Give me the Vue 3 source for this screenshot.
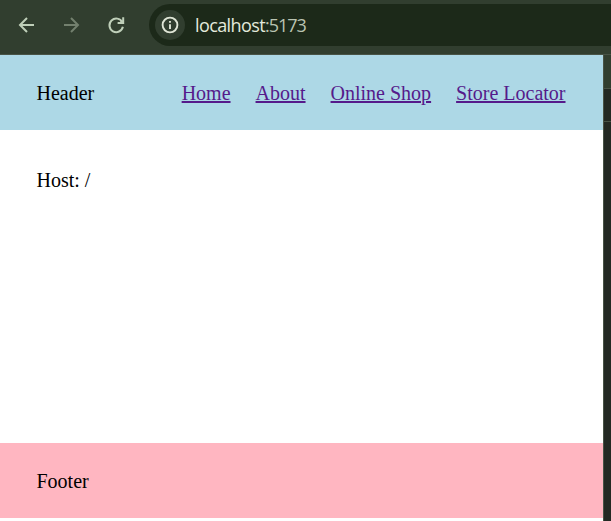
<script setup>
const links = ['Home', 'About', 'Online Shop', 'Store Locator']
</script>

<template>
  <div class="browser">
    <div class="toolbar">
      <svg class="icon back" viewBox="0 0 24 24" width="24" height="24">
        <path d="M19 12H5.5M12 5L5 12L12 19" />
      </svg>
      <svg class="icon forward" viewBox="0 0 24 24" width="24" height="24">
        <path d="M5 12H18.5M12 5L19 12L12 19" />
      </svg>
      <svg class="icon reload" viewBox="0 0 24 24" width="24" height="24">
        <path d="M18.3 9.2A6.8 6.8 0 1 0 18.9 13.8" />
        <path d="M19.2 4.2V10H13.6M18.6 9.4L16.6 7.4" />
      </svg>
      <div class="address">
        <span class="info">
          <svg viewBox="0 0 18 18" width="18" height="18">
            <circle cx="9" cy="9" r="7.4" />
            <path d="M9 8.2V13M9 5V6.7" />
          </svg>
        </span>
        <span class="url">localhost<span class="port">:5173</span></span>
      </div>
    </div>
    <div class="body">
      <div class="page">
        <header class="header">
          <span>Header</span>
          <nav class="nav">
            <a v-for="l in links" :key="l" href="#">{{ l }}</a>
          </nav>
        </header>
        <main class="main">Host: /</main>
        <footer class="footer">Footer</footer>
      </div>
      <aside class="devtools">
        <div class="tabs"></div>
        <div class="filters"></div>
      </aside>
    </div>
  </div>
</template>

<style>
body {
  margin: 0;
  overflow: hidden;
}
</style>

<style scoped>
.browser {
  box-sizing: border-box;
  width: 611px;
  height: 521px;
  display: flex;
  flex-direction: column;
  overflow: hidden;
  background: #fff;
}
.toolbar {
  box-sizing: border-box;
  height: 55px;
  flex: none;
  display: flex;
  align-items: flex-start;
  padding: 4px 0 0 15px;
  background: #313e2f;
  border-bottom: 1px solid #485346;
}
.icon {
  flex: none;
  margin-top: 9px;
  fill: none;
  stroke: #bfcfb9;
  stroke-width: 2;
}
.forward {
  margin-left: 20px;
  stroke: #73806e;
}
.reload {
  margin-left: 21px;
}
.address {
  box-sizing: border-box;
  flex: 1;
  height: 42px;
  margin-left: 21px;
  display: flex;
  align-items: center;
  padding-left: 6px;
  border-radius: 21px 0 0 21px;
  background: #1c2919;
}
.info {
  width: 30px;
  height: 30px;
  display: flex;
  align-items: center;
  justify-content: center;
  border-radius: 50%;
  background: #313e2f;
}
.info svg {
  fill: none;
  stroke: #dfe5d6;
  stroke-width: 1.9;
}
.url {
  margin-left: 10px;
  font: 18px/24px "Open Sans", "Noto Sans", sans-serif;
  letter-spacing: -0.6px;
  color: #e3e9dc;
}
.port {
  letter-spacing: -1px;
  color: #b9c3b1;
}
.body {
  flex: 1;
  display: flex;
  min-height: 0;
}
.page {
  width: 603px;
  height: 463px;
  display: flex;
  flex-direction: column;
  font: 20px/23px "Liberation Serif", "Times New Roman", serif;
  color: #000;
}
.header,
.footer {
  box-sizing: border-box;
  height: 75px;
  flex: none;
  display: flex;
  align-items: center;
  justify-content: space-between;
  padding: 2px 37.5px 0 36.5px;
}
.header {
  background: lightblue;
}
.footer {
  background: lightpink;
}
.nav {
  display: flex;
  gap: 25px;
}
.nav a {
  color: #551a8b;
}
.main {
  flex: 1;
  padding: 39px 36.5px;
}
.devtools {
  flex: 1;
  border-left: 1px solid #485346;
  background: #232923;
}
.tabs {
  height: 33px;
  background: #313e2f;
  border-bottom: 1px solid #485346;
}
.filters {
  height: 32px;
  border-bottom: 1px solid #485346;
}
</style>
